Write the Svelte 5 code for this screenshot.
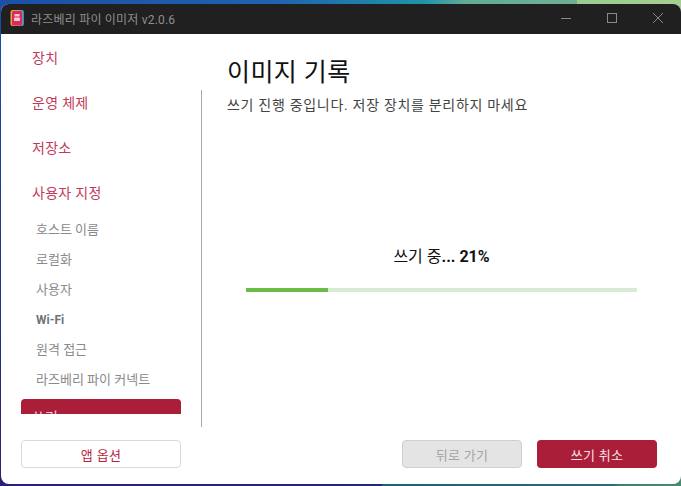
<script>
	const steps = [
		{ label: "장치", kind: "top" },
		{ label: "운영 체제", kind: "top" },
		{ label: "저장소", kind: "top" },
		{ label: "사용자 지정", kind: "top" },
		{ label: "호스트 이름", kind: "sub" },
		{ label: "로컬화", kind: "sub" },
		{ label: "사용자", kind: "sub" },
		{ label: "Wi-Fi", kind: "sub bold" },
		{ label: "원격 접근", kind: "sub" },
		{ label: "라즈베리 파이 커넥트", kind: "sub" },
		{ label: "쓰기", kind: "active" }
	];
	let progress = 21;
</script>

<div class="desktop">
	<div class="window">
		<header class="titlebar">
			<svg class="logo" width="14" height="18" viewBox="0 0 14 18">
				<rect x="0.5" y="1" width="13" height="16" rx="2" fill="#e8a33d" />
				<rect x="9" y="1" width="4.5" height="16" rx="1.5" fill="#4a9fd0" />
				<rect x="2" y="2" width="10" height="14.5" rx="1.5" fill="#d92b5c" />
				<rect x="4.5" y="5" width="5" height="2.5" fill="#f6c9d4" />
				<rect x="4" y="8.5" width="6" height="3.5" rx="1" fill="#f6c9d4" />
			</svg>
			<span class="title">라즈베리 파이 이미저 v2.0.6</span>
			<div class="controls">
				<svg width="10" height="10" viewBox="0 0 10 10"><path d="M0 5.5h10" stroke="#8a8a8a" fill="none" /></svg>
				<svg width="10" height="10" viewBox="0 0 10 10"><rect x="0.5" y="0.5" width="9" height="9" stroke="#8a8a8a" fill="none" /></svg>
				<svg width="10" height="10" viewBox="0 0 10 10"><path d="M0 0l10 10M10 0L0 10" stroke="#8a8a8a" fill="none" /></svg>
			</div>
		</header>

		<div class="body">
			<nav class="sidebar">
				{#each steps as step}
					<div class="step {step.kind}">{step.label}</div>
				{/each}
			</nav>
			<main class="content">
				<h1>이미지 기록</h1>
				<div class="panel">
					<p class="hint">쓰기 진행 중입니다. 저장 장치를 분리하지 마세요</p>
					<div class="status">
						<div class="percent">쓰기 중<b>... {progress}%</b></div>
						<div class="track"><div class="fill" style="width: {progress}%"></div></div>
					</div>
				</div>
			</main>
		</div>

		<footer class="footer">
			<button class="btn outline">앱 옵션</button>
			<div class="right">
				<button class="btn disabled">뒤로 가기</button>
				<button class="btn primary">쓰기 취소</button>
			</div>
		</footer>
	</div>
</div>

<style>
	:global(body) {
		margin: 0;
	}

	.desktop {
		width: 681px;
		height: 486px;
		box-sizing: border-box;
		padding: 4px 0 2px 1px;
		overflow: hidden;
		background:
			linear-gradient(90deg, #1b4fa8 0%, #1f62b0 40%, #1f93a8 62%, #62ab96 68.5%, #6fb094 84.7%, #9ccb90 84.8%, #a4d090 100%) top / 100% 10px no-repeat,
			linear-gradient(90deg, #2b1f7a 0%, #23277a 56%, #1c6274 56.1%, #2a6c74 90%, #3f8070 91%, #4a8a70 100%) bottom / 100% 10px no-repeat,
			linear-gradient(180deg, #1b4fa8, #2b1f7a);
		font-family: "Roboto", "Noto Sans CJK KR", sans-serif;
	}

	.window {
		height: 100%;
		display: flex;
		flex-direction: column;
		background: #fff;
		border-radius: 8px;
		overflow: hidden;
	}

	.titlebar {
		height: 30px;
		flex: none;
		box-sizing: border-box;
		display: flex;
		align-items: center;
		padding: 0 0 2px 9px;
		background: #202020;
	}

	.logo {
		margin-right: 7px;
	}

	.title {
		font-size: 12px;
		letter-spacing: 0.2px;
		color: #8f8f8f;
	}

	.controls {
		margin-left: auto;
		display: flex;
		align-items: center;
		gap: 36px;
		padding-right: 18px;
	}

	.body {
		flex: 1;
		min-height: 0;
		display: flex;
	}

	.sidebar {
		width: 160px;
		height: 380px;
		flex: none;
		margin: 0 20px;
		overflow: hidden;
		display: flex;
		flex-direction: column;
		align-items: stretch;
	}

	.step {
		flex: none;
		box-sizing: border-box;
		padding-left: 11px;
		line-height: 20px;
	}

	.top {
		height: 45px;
		padding-top: 14px;
		font-size: 14px;
		letter-spacing: 0.3px;
		color: #c23a5a;
	}

	.sub {
		height: 30px;
		line-height: 32px;
		padding-left: 15px;
		font-size: 13px;
		color: #8a8a8a;
	}

	.bold {
		font-size: 12px;
		font-weight: 700;
		color: #6f7378;
	}

	.active {
		height: 30px;
		padding-top: 8px;
		margin-top: 5px;
		font-size: 14px;
		color: #f4cdd6;
		background: #aa1e39;
		border-radius: 4px 4px 0 0;
	}

	.content {
		flex: 1;
		min-width: 0;
		padding-top: 20px;
	}

	h1 {
		margin: 0 0 0 26px;
		height: 36px;
		font-size: 25px;
		line-height: 37px;
		letter-spacing: 0.4px;
		font-weight: 400;
		color: #111;
	}

	.panel {
		height: 337px;
		padding-left: 25px;
		border-left: 1px solid #a8a8a8;
		display: flex;
		flex-direction: column;
	}

	.hint {
		margin: 5px 0 0;
		font-size: 14px;
		line-height: 20px;
		letter-spacing: 0.7px;
		color: #444;
	}

	.status {
		margin: 132px 0 0 19px;
		width: 391px;
	}

	.percent {
		text-align: center;
		font-size: 16px;
		line-height: 20px;
		color: #111;
	}

	.track {
		height: 4px;
		margin-top: 21px;
		background: #d8ecd3;
	}

	.fill {
		height: 100%;
		background: #6cbb47;
	}

	.footer {
		flex: none;
		height: 57px;
		display: flex;
		justify-content: space-between;
		padding: 13px 24px 0 20px;
		box-sizing: border-box;
	}

	.right {
		display: flex;
		gap: 15px;
	}

	.btn {
		height: 28px;
		box-sizing: border-box;
		border-radius: 4px;
		font: inherit;
		font-size: 13px;
		letter-spacing: 0.3px;
		padding: 0;
	}

	.outline {
		width: 160px;
		background: #fff;
		border: 1px solid #d9d9d9;
		color: #b71f43;
	}

	.disabled {
		width: 120px;
		background: #e4e4e4;
		border: 1px solid #cfcfcf;
		color: #a5a5a5;
	}

	.primary {
		width: 120px;
		background: #aa1e39;
		border: none;
		color: #f6e3e7;
	}
</style>
